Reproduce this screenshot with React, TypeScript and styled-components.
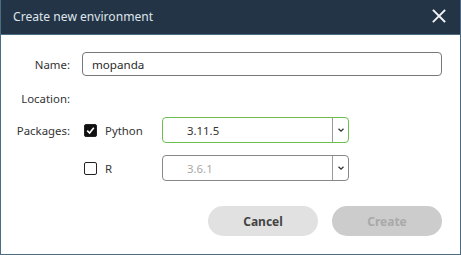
import styled, { createGlobalStyle } from 'styled-components'

const GlobalStyle = createGlobalStyle`
  html, body {
    margin: 0;
    padding: 0;
    background: #ffffff;
  }
  body {
    font-family: "Noto Sans", "Open Sans", sans-serif;
    font-size: 11.4px;
    color: #333333;
  }
  * { box-sizing: border-box; }
`

function CloseIcon(): JSX.Element {
  return (
    <svg width="14" height="14" viewBox="0 0 14 14">
      <path d="M1.5 1.5 L12.5 12.5 M12.5 1.5 L1.5 12.5" stroke="#f2f4f6" strokeWidth="1.8" strokeLinecap="square" />
    </svg>
  )
}

function Chevron(): JSX.Element {
  return (
    <svg width="8" height="6" viewBox="0 0 8 6">
      <path d="M1.5 1.8 L4 4.2 L6.5 1.8" stroke="#333" strokeWidth="1.3" fill="none" />
    </svg>
  )
}

function CheckMark(): JSX.Element {
  return (
    <svg width="9" height="9" viewBox="0 0 9 9">
      <path d="M1.2 4.6 L3.6 7 L7.8 1.8" stroke="#ffffff" strokeWidth="1.6" fill="none" />
    </svg>
  )
}

function App(): JSX.Element {
  return (
    <>
      <GlobalStyle />
      <Window>
        <Header>
          <Title>Create new environment</Title>
          <CloseBtn><CloseIcon /></CloseBtn>
        </Header>
        <Body>
          <Row>
            <Label>Name:</Label>
            <TextInput defaultValue="mopanda" />
          </Row>
          <Row $top={12} $height={20}>
            <Label>Location:</Label>
          </Row>
          <Row $top={9} $height={26}>
            <Label>Packages:</Label>
            <Package>
              <Check $checked><CheckMark /></Check>
              <PkgName>Python</PkgName>
            </Package>
            <Select $active>
              <SelectValue>3.11.5</SelectValue>
              <Arrow><Chevron /></Arrow>
            </Select>
          </Row>
          <Row $top={12} $height={26}>
            <Label />
            <Package>
              <Check />
              <PkgName>R</PkgName>
            </Package>
            <Select>
              <SelectValue $muted>3.6.1</SelectValue>
              <Arrow><Chevron /></Arrow>
            </Select>
          </Row>
          <Buttons>
            <Button>Cancel</Button>
            <Button $disabled>Create</Button>
          </Buttons>
        </Body>
      </Window>
    </>
  )
}
export default App;

const Window = styled.div`
  width: 461px;
  height: 255px;
  border: 1px solid #4b6c83;
  border-top: none;
  background: #ffffff;
  display: flex;
  flex-direction: column;
`

const Header = styled.div`
  height: 35px;
  background: #243447;
  border-bottom: 1px solid #4b6c83;
  display: flex;
  align-items: center;
  justify-content: space-between;
  padding: 0 14px 0 12px;
`

const Title = styled.div`
  color: #dfe5ea;
  font-size: 12.1px;
  margin-top: -1px;
`

const CloseBtn = styled.div`
  display: flex;
  align-items: center;
  margin-top: -2px;
`

const Body = styled.div`
  padding: 17px 18px 0 0;
  display: flex;
  flex-direction: column;
`

const Row = styled.div<{ $top?: number; $height?: number }>`
  display: flex;
  align-items: center;
  height: ${p => p.$height ?? 24}px;
  margin-top: ${p => p.$top ?? 0}px;
`

const Label = styled.div`
  width: 69px;
  margin-right: 12px;
  text-align: right;
  color: #333333;
`

const TextInput = styled.input`
  flex: 1;
  height: 24px;
  border: 1px solid #777777;
  border-radius: 4px;
  padding: 0 9px;
  font-family: inherit;
  font-size: 11.6px;
  color: #2a2a2a;
  outline: none;
`

const Package = styled.div`
  width: 80px;
  display: flex;
  align-items: center;
  padding-left: 2px;
`

const Check = styled.div<{ $checked?: boolean }>`
  width: 13px;
  height: 13px;
  border: 1.5px solid #222222;
  border-radius: 2px;
  background: ${p => (p.$checked ? '#111111' : '#ffffff')};
  display: flex;
  align-items: center;
  justify-content: center;
`

const PkgName = styled.span`
  margin-left: 8px;
  color: #333333;
`

const Select = styled.div<{ $active?: boolean }>`
  width: 187px;
  height: 26px;
  border: 1px solid ${p => (p.$active ? '#6cbf4f' : '#888888')};
  border-radius: 4px;
  display: flex;
  align-items: center;
`

const SelectValue = styled.div<{ $muted?: boolean }>`
  flex: 1;
  padding-left: 24px;
  color: ${p => (p.$muted ? '#a8a8a8' : '#333333')};
`

const Arrow = styled.div`
  width: 16px;
  height: 100%;
  border-left: 1px solid #999999;
  display: flex;
  align-items: center;
  justify-content: center;
`

const Buttons = styled.div`
  display: flex;
  justify-content: flex-end;
  gap: 14px;
  margin-top: 25px;
`

const Button = styled.div<{ $disabled?: boolean }>`
  width: 110px;
  height: 30px;
  border-radius: 15px;
  background: ${p => (p.$disabled ? '#cccccc' : '#e1e1e1')};
  color: ${p => (p.$disabled ? '#a9a9a9' : '#444444')};
  font-weight: 700;
  font-size: 12px;
  display: flex;
  align-items: center;
  justify-content: center;
`
